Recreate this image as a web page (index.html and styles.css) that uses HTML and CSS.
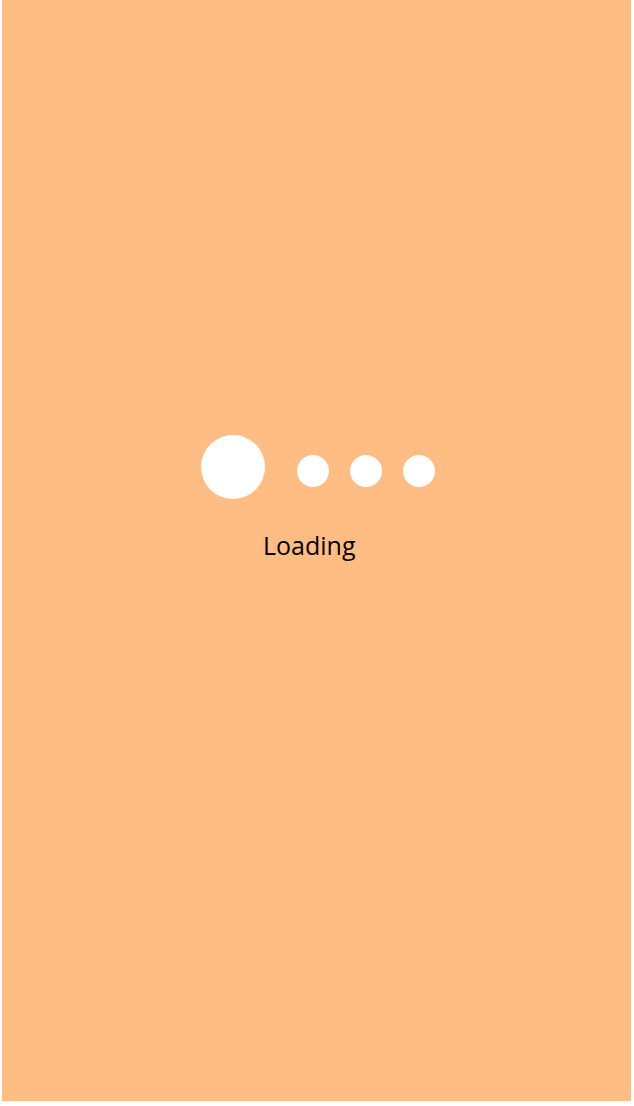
FILE: index.html
```html
<!DOCTYPE html>
<html>
<head>
<meta charset="utf-8">
<link rel="stylesheet" href="styles.css">
</head>
<body>
<div class="screen">
  <div class="dots">
    <span class="dot big"></span>
    <span class="dot small first"></span>
    <span class="dot small"></span>
    <span class="dot small"></span>
  </div>
  <div class="label">Loading</div>
</div>
</body>
</html>
```
FILE: styles.css
```css
html, body {
  margin: 0;
  padding: 0;
  background: #ffffff;
}
.screen {
  margin-left: 2px;
  width: 629px;
  height: 1101px;
  background: #ffbd84;
  box-sizing: border-box;
  padding-top: 435px;
  padding-left: 199px;
}
.dots {
  display: flex;
  align-items: flex-start;
}
.dot {
  display: block;
  background: #ffffff;
  border-radius: 50%;
}
.big {
  width: 64px;
  height: 64px;
}
.small {
  width: 32px;
  height: 32px;
  margin-top: 20px;
  margin-left: 21px;
}
.small.first {
  margin-left: 32px;
}
.label {
  margin-top: 29px;
  margin-left: 62px;
  font-family: "Open Sans", sans-serif;
  font-size: 25px;
  line-height: 34px;
  color: #000000;
}
```
